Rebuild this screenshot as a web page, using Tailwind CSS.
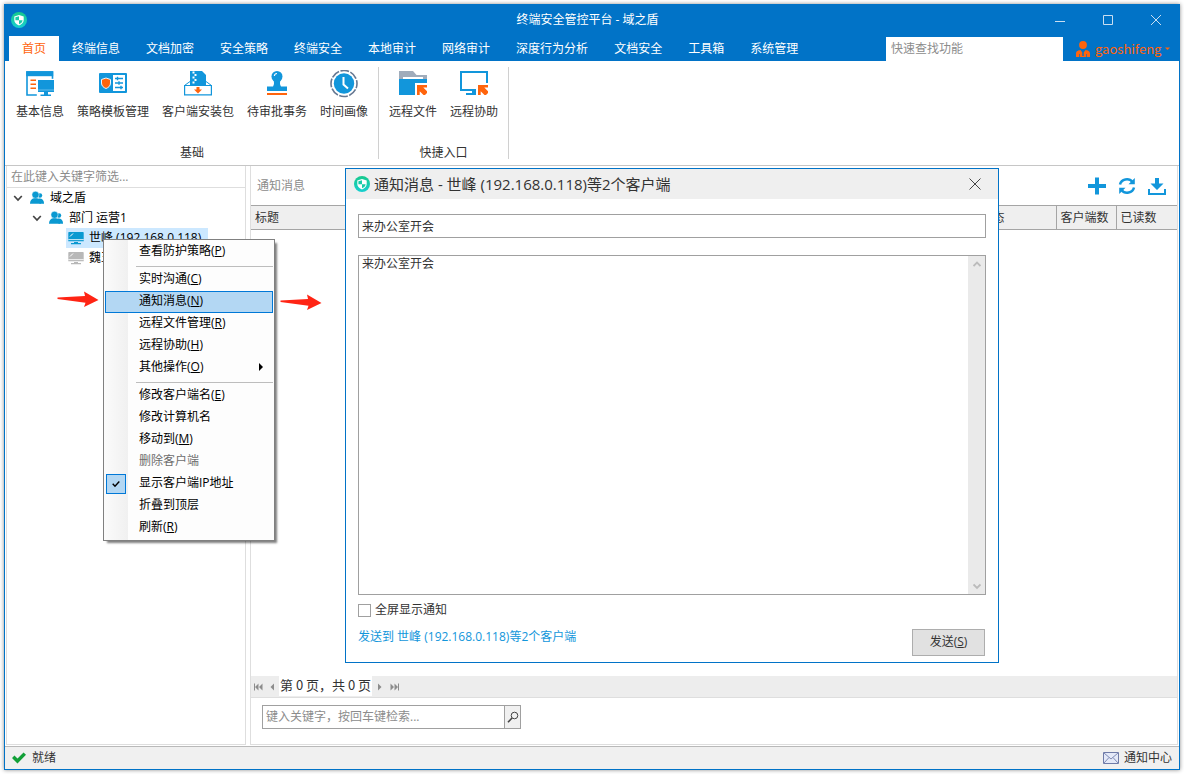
<!DOCTYPE html>
<html lang="zh-CN">
<head>
<meta charset="utf-8">
<title>终端安全管控平台 - 域之盾</title>
<script src="https://cdn.jsdelivr.net/npm/@tailwindcss/browser@4"></script>
</head>
<body class="bg-white font-['Open_Sans','Noto_Sans_CJK_SC',sans-serif] text-xs leading-4 text-[#333]">
<svg class="absolute size-0" aria-hidden="true">
  <defs>
    <linearGradient id="brand" x1="0" y1="0" x2="0" y2="1"><stop offset="0" stop-color="#17c98c"/><stop offset="1" stop-color="#17cfd0"/></linearGradient>
    <symbol id="logo" viewBox="0 0 16 16"><circle cx="8" cy="8" r="8" fill="url(#brand)"/><path d="M8 3 12.700 4.400V8c0 2.700-2 4.300-4.700 5.400C5.300 12.300 3.300 10.700 3.300 8V4.400z" fill="#fff"/><path d="M8 4.200v4H4.400V5.200zM8 8.200h3.600C11.500 10 10 11.400 8 12.200z" fill="#19cba8"/></symbol>
    <symbol id="group" viewBox="0 0 14 14"><circle cx="10" cy="4.500" r="2.200" fill="#0a99d1"/><path d="M8.500 7.500c3-.6 5.500 1 5.500 4.500v.8H9.500z" fill="#0a99d1"/><circle cx="5.500" cy="3.800" r="3.600" fill="#0a99d1" stroke="#fff" stroke-width=".5"/><path d="M0 12.800c0-3.600 1.600-5 4-5.600h3c2.400.6 4 2 4 5.600z" fill="#0a99d1"/></symbol>
    <symbol id="pc" viewBox="0 0 16 14"><path d="M1 1h14a.7.7 0 0 1 .7.700v8.600H.3V1.700A.7.700 0 0 1 1 1zM6 11h4v1.500H6zM3 12h10v1.200H3z" fill="currentColor"/><path d="M.3 8.600h15.400" stroke="#fff" stroke-width=".8"/><path d="m2 5.500 3-3" stroke="#fff" stroke-width="1"/></symbol>
    <symbol id="cursor" viewBox="0 0 10 10"><path d="M0 0h10v2.500H6.300L10 6.200 10 8 8 10H6.500L2.700 6.200V10H0z" fill="#ff640c"/></symbol>
    <symbol id="redarrow" viewBox="0 0 42 18"><path d="M.5 7.500 28 6 27 1.500 41.500 10 27 17 28.500 12.800.5 9z" fill="#ff2414"/></symbol>
  </defs>
</svg>

<div class="flex h-screen p-1">
<div class="relative flex min-w-0 flex-1 flex-col border border-t-0 border-[#0173c7] bg-white shadow-[0_0_4px_rgba(0,0,0,0.45)]">

  <header class="bg-[#0173c7] text-white">
    <div class="flex h-8 items-center justify-between px-1.5">
      <div class="flex flex-1"><svg class="size-4"><use href="#logo"/></svg></div>
      <h1>终端安全管控平台 - 域之盾</h1>
      <div class="flex flex-1 items-center justify-end gap-8 pr-[9px]">
        <button type="button" aria-label="最小化" class="flex size-4 items-center justify-center"><svg class="size-3 stroke-[#c9def1]" viewBox="0 0 12 12" fill="none"><path d="M1 7.500h10"/></svg></button>
        <button type="button" aria-label="最大化" class="flex size-4 items-center justify-center"><svg class="size-3 stroke-[#c9def1]" viewBox="0 0 12 12" fill="none"><path d="M1.500 1.500h9v9h-9z"/></svg></button>
        <button type="button" aria-label="关闭" class="flex size-4 items-center justify-center"><svg class="size-3 stroke-[#c9def1]" viewBox="0 0 12 12" fill="none"><path d="m1 1 10 10M11 1 1 11"/></svg></button>
      </div>
    </div>
    <div class="flex h-[25px] items-end pl-1">
      <nav class="flex h-full" aria-label="功能">
        <a href="#" class="bg-white px-[13px] pt-[5px] text-[#ff640c]">首页</a>
        <a href="#" class="px-[13px] pt-[5px]">终端信息</a>
        <a href="#" class="px-[13px] pt-[5px]">文档加密</a>
        <a href="#" class="px-[13px] pt-[5px]">安全策略</a>
        <a href="#" class="px-[13px] pt-[5px]">终端安全</a>
        <a href="#" class="px-[13px] pt-[5px]">本地审计</a>
        <a href="#" class="px-[13px] pt-[5px]">网络审计</a>
        <a href="#" class="px-[13px] pt-[5px]">深度行为分析</a>
        <a href="#" class="px-[13px] pt-[5px]">文档安全</a>
        <a href="#" class="px-[13px] pt-[5px]">工具箱</a>
        <a href="#" class="px-[13px] pt-[5px]">系统管理</a>
      </nav>
      <input type="text" aria-label="快速查找功能" placeholder="快速查找功能" class="ml-auto h-6 w-[177px] bg-white px-[5px] pb-0.5 text-[#333] placeholder:text-[#8c8c8c]">
      <button type="button" class="flex h-6 w-[116px] items-center pl-3 text-[#ff640c]">
        <svg class="h-4 w-4" viewBox="0 0 16 16" fill="#ff640c"><ellipse cx="8" cy="4" rx="3.900" ry="4"/><path d="M1 16v-3.500C1 10 3.500 9.300 5.500 9L7.300 11.500V15h1.400v-3.500L10.500 9c2 .3 4.500 1 4.500 3.500V16z"/><path d="M4.500 13v3M11.500 13v3" stroke="#0173c7" stroke-width=".7"/></svg>
        <span class="ml-1 font-['Noto_Sans_CJK_SC',sans-serif] text-[13px]">gaoshifeng</span>
        <svg class="ml-1 h-1 w-[5px]" viewBox="0 0 5 4" fill="#ff640c"><path d="M0 .5h5L2.500 3z"/></svg>
      </button>
    </div>
  </header>

  <section class="flex h-[105px] border-b border-[#c6c6c6]" aria-label="功能区">
    <div class="my-1.5 flex flex-col items-center justify-between border-r border-[#d0d0d0] pl-[11px] pr-2.5">
      <div class="flex gap-[13px] pt-[3px]">
        <button type="button" class="flex flex-col items-center gap-1.5">
          <svg class="size-7" viewBox="0 0 28 28"><path d="M1 2h25.500v23H1z" fill="#fff" stroke="#1296db" stroke-width="1.600"/><path d="M.2 1.200h27v5h-27z" fill="#1296db"/><path d="M4.500 10.300h5.500M4.500 14.300h5.500M4.500 18.300h5.500" stroke="#ff640c" stroke-width="1.500"/><path d="M10.800 8.800H28v18.700H10.800z" fill="#fff"/><path d="M12 10h16v12H12zM18 22h4v2.500h3V26H14.500v-1.500H18z" fill="#1296db"/><path d="M12 20h16" stroke="#64bdea" stroke-width="1"/></svg>
          <span>基本信息</span>
        </button>
        <button type="button" class="flex flex-col items-center gap-1.5">
          <svg class="size-7" viewBox="0 0 28 28"><rect y="3" width="28" height="20" rx="1" fill="#1296db"/><path d="M7 8 11.500 9.500V13c0 3-2 4.500-4.500 5.500C4.500 17.500 2.500 16 2.500 13V9.500z" fill="#ff640c" stroke="#e9f6fd"/><path d="M14 5h12v16H14z" fill="#fff"/><path d="M16 8.500h8M16 13h8M16 17.500h8" stroke="#1296db" stroke-width="1.300"/><path d="M18.500 6.800v3.400M20 11.300v3.400M22 15.800v3.400" stroke="#1296db" stroke-width="1.400"/></svg>
          <span>策略模板管理</span>
        </button>
        <button type="button" class="flex flex-col items-center gap-1.5">
          <svg class="size-7" viewBox="0 0 28 28"><path d="M6 1h12l4 4v11H6z" fill="#1296db"/><path d="M8.500 2.500h2M10.500 5h2M8.500 7.500h2M10.500 10h2M8.500 12.500h2" stroke="#fff" stroke-width="1.900"/><path d="m6 11.500-5.500 4M22 11.500l5.500 4" stroke="#1296db"/><path d="M.6 15.500h26.800v9.300H.6z" fill="#fff" stroke="#1296db" stroke-width="1.200"/><path d="M12.500 17h3v2.500H18l-4 4-4-4h2.500z" fill="#ff640c"/></svg>
          <span>客户端安装包</span>
        </button>
        <button type="button" class="flex flex-col items-center gap-1.5">
          <svg class="size-7" viewBox="0 0 28 28"><circle cx="14" cy="6.500" r="5.500" fill="#1296db"/><path d="M10.500 10h7c-.8 3-.7 4.500.5 6.500h6v4.500H4v-4.500h6c1.200-2 1.300-3.500.5-6.500z" fill="#1296db"/><path d="M11.300 6c.2-1.700 1.200-2.500 2.700-2.500" stroke="#fff" stroke-width="1.100" fill="none"/><path d="M4 23h20v2H4z" fill="#ff640c"/></svg>
          <span>待审批事务</span>
        </button>
        <button type="button" class="flex flex-col items-center gap-1.5">
          <svg class="size-7" viewBox="0 0 28 28" fill="none"><circle cx="14" cy="13.500" r="13" stroke="#667892" stroke-width="1.600" stroke-dasharray="8.700 1.510" stroke-dashoffset="4"/><circle cx="14" cy="13.500" r="10.200" fill="#1296db"/><path d="M13.500 7v7.500l4.500 4" stroke="#fff" stroke-width="2"/></svg>
          <span>时间画像</span>
        </button>
      </div>
      <h2 class="-mb-0.5">基础</h2>
    </div>
    <div class="my-1.5 flex flex-col items-center justify-between border-r border-[#d0d0d0] px-2.5">
      <div class="flex gap-[13px] pt-[3px]">
        <button type="button" class="flex flex-col items-center gap-1.5">
          <svg class="size-7" viewBox="0 0 28 28"><path d="M0 1h14l3.500 4H28v4H0z" fill="#a0acbb"/><path d="M4 7h20v2H4z" fill="#fff"/><path d="M0 9h28v4H16v12H0z" fill="#1296db"/><use href="#cursor" x="18" y="15" width="10" height="10"/></svg>
          <span>远程文件</span>
        </button>
        <button type="button" class="flex flex-col items-center gap-1.5">
          <svg class="size-7" viewBox="0 0 28 28"><path d="M0 1h28v12h-2V3H2v16h14v6H6v-2h6v-2H0z" fill="#1296db"/><use href="#cursor" x="18" y="15" width="10" height="10"/></svg>
          <span>远程协助</span>
        </button>
      </div>
      <h2 class="-mb-0.5">快捷入口</h2>
    </div>
  </section>

  <main class="flex min-h-0 flex-1 gap-1 px-px pb-px">
    <aside class="flex w-60 flex-col border border-t-0 border-[#dedede]">
      <input type="text" aria-label="筛选" placeholder="在此键入关键字筛选..." class="h-[22px] border-b border-[#dedede] bg-white px-1 pb-px placeholder:text-[#8c8c8c]">
      <ul class="text-black">
        <li class="flex h-5 items-center gap-1.5 pb-px pl-[5px]"><svg class="size-3" viewBox="0 0 12 12" fill="none" stroke="#444" stroke-width="1.700"><path d="m2.200 4 3.800 4 3.800-4"/></svg><svg class="size-3.5"><use href="#group"/></svg>域之盾</li>
        <li class="flex h-5 items-center gap-1.5 pb-px pl-6"><svg class="size-3" viewBox="0 0 12 12" fill="none" stroke="#444" stroke-width="1.700"><path d="m2.200 4 3.800 4 3.800-4"/></svg><svg class="size-3.5"><use href="#group"/></svg>部门 运营1</li>
        <li class="ml-[59px] flex h-5 w-[142px] items-center gap-[5px] bg-[#cce8ff] pl-0.5"><svg class="h-3.5 w-4 text-[#0a99d1]"><use href="#pc"/></svg>世峰 (192.168.0.118)</li>
        <li class="ml-[59px] flex h-5 items-center gap-[5px] pl-0.5"><svg class="h-3.5 w-4 text-[#b8b8b8]"><use href="#pc"/></svg>魏玉</li>
      </ul>
    </aside>

    <section class="flex min-w-0 flex-1 flex-col border border-t-0 border-[#dedede]">
      <div class="flex h-[39px] items-center justify-between pl-1.5 pr-[11px]">
        <h2 class="text-[#8c8c8c]">通知消息</h2>
        <div class="flex items-center gap-3">
          <button type="button" aria-label="新增"><svg class="size-[18px]" viewBox="0 0 18 18" fill="#1296db"><path d="M7 .5h4V7h7v4h-7v6.500H7V11H0V7h7z"/></svg></button>
          <button type="button" aria-label="刷新"><svg class="size-[18px]" viewBox="0 0 18 18" fill="none" stroke="#1296db" stroke-width="2.500"><path d="M2 7.500A7 6.500 0 0 1 14.500 5M16 10.500A7 6.500 0 0 1 3.500 13"/><path d="M16.800 1v6.300h-6.300zM1.200 17v-6.300h6.300z" fill="#1296db" stroke="none"/></svg></button>
          <button type="button" aria-label="下载"><svg class="size-[18px]" viewBox="0 0 18 18" fill="#1296db"><path d="M7 1h4v5.500h4.500L9 13 2.500 6.500H7z"/><path d="M0 12h2v4h14v-4h2v6H0z"/></svg></button>
        </div>
      </div>
      <table class="w-full table-fixed border-y border-[#a5a5a5] bg-[#efefef]">
        <thead><tr class="h-6 text-left">
          <th class="pl-1 font-normal">标题</th>
          <th class="w-20 border-l border-[#a5a5a5] pl-1 font-normal">状态</th>
          <th class="w-15 border-l border-[#a5a5a5] pl-1 font-normal">客户端数</th>
          <th class="w-[61px] border-l border-[#a5a5a5] pl-1 font-normal">已读数</th>
        </tr></thead>
      </table>
      <div class="flex-1"></div>
      <nav class="flex h-[22px] items-stretch border-b border-[#dedede] bg-[#ededed]" aria-label="分页">
        <button type="button" aria-label="首页" class="w-4 pl-0.5"><svg class="h-2 w-3" viewBox="0 0 12 8" fill="#8c8c8c"><path d="M1 .5h1v7H1zM2 4l3.500-3.500v7zM6 4 9.500.5v7z"/></svg></button>
        <button type="button" aria-label="上一页" class="w-3 pl-0.5"><svg class="h-2 w-2" viewBox="0 0 8 8" fill="#8c8c8c"><path d="M1.500 4 5 .5v7z"/></svg></button>
        <span class="mb-px bg-white px-px font-['Noto_Sans_CJK_SC',sans-serif] text-[13px] leading-[18px]">第 0 页，共 0 页</span>
        <button type="button" aria-label="下一页" class="w-4 pl-1"><svg class="h-2 w-2" viewBox="0 0 8 8" fill="#8c8c8c"><path d="M5.500 4 2 .5v7z"/></svg></button>
        <button type="button" aria-label="末页" class="w-4"><svg class="h-2 w-3" viewBox="0 0 12 8" fill="#8c8c8c"><path d="M10 .5h1v7h-1zM10 4 6.500.5v7zM6 4 2.500.5v7z"/></svg></button>
      </nav>
      <div class="flex h-[46px] pl-[11px] pt-[7px]">
        <div class="flex h-6 w-[259px] border border-[#a0a0a0]">
          <input type="text" aria-label="检索" placeholder="键入关键字，按回车键检索..." class="min-w-0 flex-1 bg-white px-[3px] placeholder:text-[#8c8c8c]">
          <button type="button" aria-label="检索" class="flex w-4 items-center justify-center border-l border-[#a0a0a0] bg-[#f0f0f0]"><svg class="size-3" viewBox="0 0 12 12" fill="none" stroke="#444"><circle cx="7.500" cy="4.500" r="3.300"/><path d="M5 7 1 11.300" stroke-width="1.600"/></svg></button>
        </div>
      </div>
    </section>
  </main>

  <footer class="flex h-[23px] items-center justify-between border-t border-[#b9b9b9] bg-[#f0f0f0] px-[7px]">
    <span class="flex items-center gap-1.5"><svg class="h-3 w-3.5" viewBox="0 0 14 12" fill="#12a038"><path d="M0 6 2.500 3.500 5.500 6.500 11.500.5 14 2.800 5.500 11.500z"/></svg>就绪</span>
    <a href="#" class="flex items-center gap-[5px]"><svg class="h-3 w-4" viewBox="0 0 16 12"><path d="M.5.500h15v11H.5z" fill="#e4e9f8" stroke="#6f7ba8"/><path d="m1 1 7 6 7-6M1 11l5-5.500M15 11l-5-5.500" fill="none" stroke="#7f8bb5"/></svg>通知中心</a>
  </footer>

  <!-- Message window floating over the workspace -->
  <form role="dialog" aria-labelledby="dlg" class="absolute left-[340px] top-[164px] flex h-[495px] w-[654px] flex-col border border-[#0173c7] bg-white">
    <div class="flex h-[30px] items-center bg-[#efefef] pl-2 pr-[17px]">
      <svg class="size-4"><use href="#logo"/></svg>
      <h2 id="dlg" class="ml-1 text-[15px] leading-5">通知消息 - 世峰 (192.168.0.118)等2个客户端</h2>
      <button type="button" aria-label="关闭" class="ml-auto"><svg class="size-3" viewBox="0 0 12 12" stroke="#444"><path d="m.5.500 11 11M11.500.500l-11 11"/></svg></button>
    </div>
    <div class="flex min-h-0 flex-1 flex-col px-3 pt-[15px]">
      <input type="text" aria-label="标题" value="来办公室开会" class="h-6 border border-[#a0a0a0] px-[3px] pb-px">
      <div class="mt-[17px] flex min-h-0 flex-1 border border-[#a0a0a0]">
        <textarea aria-label="内容" class="min-w-0 flex-1 resize-none px-[3px] leading-4">来办公室开会</textarea>
        <div class="flex w-[17px] flex-col items-center justify-between bg-[#eaeaea] py-1" aria-hidden="true">
          <svg class="size-2" viewBox="0 0 8 8" fill="none" stroke="#bbb" stroke-width="1.800"><path d="m.5 6 3.500-3.500L7.500 6"/></svg>
          <svg class="size-2" viewBox="0 0 8 8" fill="none" stroke="#bbb" stroke-width="1.800"><path d="m.5 2.500 3.500 3.500 3.500-3.500"/></svg>
        </div>
      </div>
      <label class="mt-[7px] flex items-center gap-1 self-start"><input type="checkbox" class="size-[13px] appearance-none border border-[#a0a0a0] bg-white checked:bg-[#1296db]">全屏显示通知</label>
      <div class="flex h-[44px] items-start justify-between pt-[11px]">
        <a href="#" class="text-[#1296db]">发送到 世峰 (192.168.0.118)等2个客户端</a>
        <button type="submit" class="mr-px h-[27px] w-[73px] border border-[#adadad] bg-[#e1e1e1] pb-px">发送(<u>S</u>)</button>
      </div>
    </div>
  </form>

  <!-- Context menu of the selected client -->
  <div role="menu" class="absolute left-[98px] top-[235px] flex w-[172px] flex-col border border-[#808080] bg-[#fdfdfd] bg-linear-to-r from-[#fbfbfb] from-0% to-[#f0f0f0] to-100% bg-[length:24px_100%] bg-no-repeat p-px text-black shadow-[3px_3px_2px_-1px_rgba(0,0,0,0.5)]">
    <button role="menuitem" type="button" class="h-[22px] pb-0.5 pl-[34px] text-left">查看防护策略(<u>P</u>)</button>
    <hr class="mb-0.5 ml-[31px] mt-[3px] border-[#bdbdbd]">
    <button role="menuitem" type="button" class="h-[22px] pb-0.5 pl-[34px] text-left">实时沟通(<u>C</u>)</button>
    <button role="menuitem" type="button" class="h-[22px] border border-[#0078d7] bg-[#b3d7f3] pb-0.5 pl-[33px] text-left">通知消息(<u>N</u>)</button>
    <button role="menuitem" type="button" class="h-[22px] pb-0.5 pl-[34px] text-left">远程文件管理(<u>R</u>)</button>
    <button role="menuitem" type="button" class="h-[22px] pb-0.5 pl-[34px] text-left">远程协助(<u>H</u>)</button>
    <button role="menuitem" type="button" class="flex h-[22px] items-center justify-between pb-0.5 pl-[34px] pr-2.5 text-left"><span>其他操作(<u>O</u>)</span><svg class="h-2 w-1" viewBox="0 0 4 8"><path d="M0 0v8l4-4z"/></svg></button>
    <hr class="mb-0.5 ml-[31px] mt-[3px] border-[#bdbdbd]">
    <button role="menuitem" type="button" class="h-[22px] pb-0.5 pl-[34px] text-left">修改客户端名(<u>E</u>)</button>
    <button role="menuitem" type="button" class="h-[22px] pb-0.5 pl-[34px] text-left">修改计算机名</button>
    <button role="menuitem" type="button" class="h-[22px] pb-0.5 pl-[34px] text-left">移动到(<u>M</u>)</button>
    <button role="menuitem" type="button" disabled class="h-[22px] pb-0.5 pl-[34px] text-left text-[#6d6d6d]">删除客户端</button>
    <button role="menuitemcheckbox" aria-checked="true" type="button" class="flex h-[22px] items-center gap-[13px] pl-px text-left"><span class="flex size-5 items-center justify-center border border-[#0078d7] bg-[#b3d7f3]"><svg class="size-2" viewBox="0 0 8 8" fill="none" stroke="#000" stroke-width="1.400"><path d="m.7 3.700 2.300 2.500L7.300 1.500"/></svg></span><span class="pb-0.5">显示客户端IP地址</span></button>
    <button role="menuitem" type="button" class="h-[22px] pb-0.5 pl-[34px] text-left">折叠到顶层</button>
    <button role="menuitem" type="button" class="h-[22px] pb-0.5 pl-[34px] text-left">刷新(<u>R</u>)</button>
  </div>

  <!-- Step arrows -->
  <svg class="absolute left-[52px] top-[286px] h-[18px] w-[42px]"><use href="#redarrow"/></svg>
  <svg class="absolute left-[275px] top-[289px] h-[18px] w-[42px]"><use href="#redarrow"/></svg>
</div>
</div>
</body>
</html>
